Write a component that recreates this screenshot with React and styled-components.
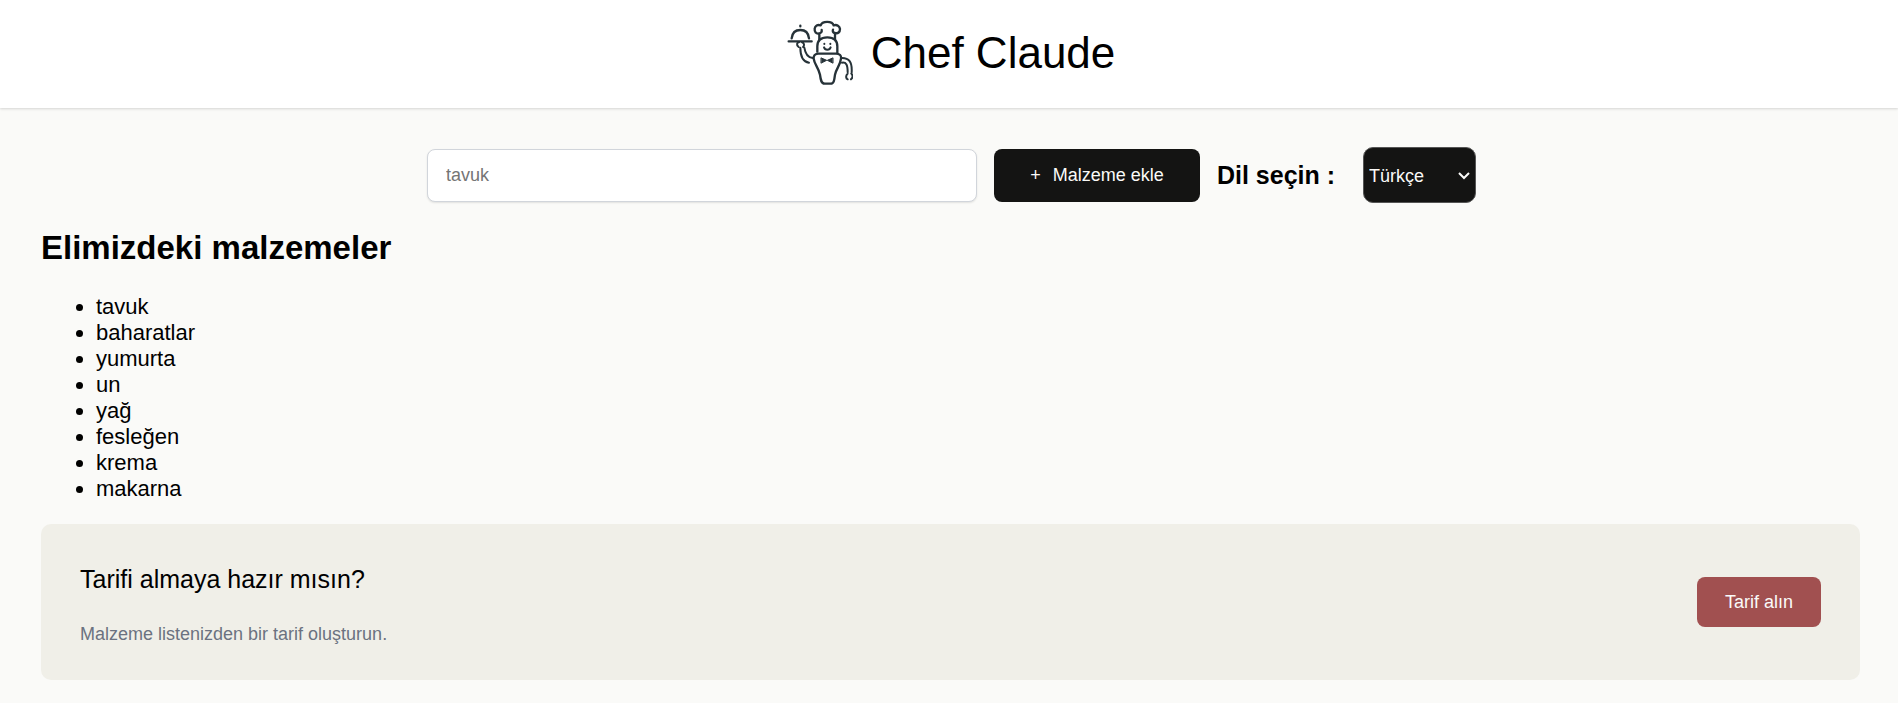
import React from "react";
import styled, { createGlobalStyle } from "styled-components";

const GlobalStyle = createGlobalStyle`
  * { box-sizing: border-box; }
  body {
    margin: 0;
    background: #fafaf8;
    color: #000;
    font-family: "Liberation Sans", Arial, sans-serif;
    font-size: 22px;
    line-height: 26px;
  }
  html { background: #fafaf8; }
  h1, h2, h3, p, ul { margin: 0; }
  button, input, select { font: inherit; font-size: 18px; }
`;

const Header = styled.header`
  display: flex;
  justify-content: center;
  align-items: center;
  gap: 18px;
  padding: 20px 16px 22px 20px;
  background: #fff;
  box-shadow: 0 1px 3px rgba(0, 0, 0, 0.1), 0 1px 2px rgba(0, 0, 0, 0.06);
  position: relative;
`;

const Title = styled.h1`
  font-size: 44px;
  line-height: 50px;
  font-weight: 400;
`;

const Logo = styled.svg`
  width: 66px;
  height: 66px;
  fill: none;
  stroke: #263238;
  stroke-width: 7;
  stroke-linecap: round;
  stroke-linejoin: round;
`;

const Main = styled.main`
  padding: 39px 38px 24px 41px;
`;

const Form = styled.form`
  display: flex;
  justify-content: center;
  align-items: center;
  gap: 17px;
  padding-left: 2px;
`;

const IngredientInput = styled.input`
  flex: 0 1 550px;
  min-width: 150px;
  height: 53px;
  padding: 0 18px;
  border: 1px solid #d1d5db;
  border-radius: 8px;
  background: #fff;
  box-shadow: 0 1px 2px rgba(0, 0, 0, 0.1);
  &::placeholder { color: #757575; }
`;

const Button = styled.button`
  display: flex;
  justify-content: center;
  align-items: center;
  gap: 12px;
  flex: none;
  width: ${(p) => p.$width}px;
  height: ${(p) => p.$height}px;
  padding: 0;
  border: 0;
  border-radius: 8px;
  background: ${(p) => p.$background};
  color: #fafaf8;
`;

const Language = styled.div`
  display: flex;
  align-items: center;
  gap: 28px;
`;

const LanguageLabel = styled.label`
  font-size: 25px;
  font-weight: 700;
  white-space: nowrap;
`;

const SelectBox = styled.div`
  display: grid;
  align-items: center;
  justify-items: end;
  & > * { grid-area: 1 / 1; }
`;

const LanguageSelect = styled.select`
  appearance: none;
  width: 113px;
  height: 56px;
  padding: 2px 24px 0 5px;
  border: 1px solid #555;
  border-radius: 10px;
  background: #141413;
  color: #fafaf8;
`;

const Chevron = styled.svg`
  width: 12px;
  height: 8px;
  margin: 2px 6px 0 0;
  fill: none;
  stroke: #fafaf8;
  stroke-width: 2;
  pointer-events: none;
`;

const Heading = styled.h2`
  margin-top: 26px;
  font-size: 33px;
  line-height: 38px;
  font-weight: 700;
`;

const Ingredients = styled.ul`
  margin-top: 27px;
  padding-left: 55px;
`;

const Card = styled.section`
  display: flex;
  justify-content: space-between;
  align-items: center;
  margin-top: 22px;
  padding: 34px 39px;
  border-radius: 10px;
  background: #f0efe8;
`;

const CardText = styled.div`
  display: grid;
  gap: 22px;
`;

const CardTitle = styled.h3`
  font-size: 25px;
  line-height: 42px;
  font-weight: 400;
`;

const CardNote = styled.p`
  font-size: 18px;
  line-height: 24px;
  color: #6b7280;
`;

const ingredients = ["tavuk", "baharatlar", "yumurta", "un", "yağ", "fesleğen", "krema", "makarna"];

function ChefLogo() {
  return (
    <Logo viewBox="21 30 198 198" aria-hidden="true">
      <path d="M26 94H95M35 85C37 67 47 60 61 60S85 67 87 85M61 47V49" />
      <path d="M118 88V70C108 73 103 65 104 56C105 47 113 43 122 46C126 32 157 32 161 46C171 43 179 48 180 57C180 66 174 72 165 69V88M118 70C124 69 126 65 125 60M165 69C159 68 157 64 159 59" />
      <path d="M112 125V109C112 90 124 82 142 82S172 90 172 109V129" />
      <path d="M133 101V102M151 101V102M132 112C135 122 149 122 152 112" strokeWidth="6" />
      <path d="M116 131H168C179 131 185 137 183 146C181 166 169 175 165 194C163 210 162 221 152 221H134C123 221 122 209 120 194C116 174 103 163 101 146C100 137 105 131 116 131Z" />
      <path d="M124 144L140 151L124 159ZM158 144L142 151L158 159Z" fill="#263238" strokeWidth="3" />
      <path d="M98 144C84 143 76 132 73 113M87 158C69 155 61 141 61 113M56 111C48 105 51 97 57 97M66 97C73 99 74 107 69 111" strokeWidth="6" />
      <path d="M184 144C207 143 217 156 215 187M186 158C199 156 203 165 203 187M203 191C196 198 198 206 203 208M213 208C219 203 219 196 214 191" strokeWidth="6" />
    </Logo>
  );
}

export default function App() {
  return (
    <>
      <GlobalStyle />
      <Header>
        <ChefLogo />
        <Title>Chef Claude</Title>
      </Header>
      <Main>
        <Form onSubmit={(e) => e.preventDefault()}>
          <IngredientInput type="text" placeholder="tavuk" aria-label="Malzeme ekle" />
          <Button type="submit" $width={206} $height={53} $background="#141413">
            <span>+</span>
            <span>Malzeme ekle</span>
          </Button>
          <Language>
            <LanguageLabel htmlFor="language">Dil seçin :</LanguageLabel>
            <SelectBox>
              <LanguageSelect id="language" defaultValue="tr">
                <option value="tr">Türkçe</option>
                <option value="en">English</option>
              </LanguageSelect>
              <Chevron viewBox="0 0 12 8" aria-hidden="true">
                <path d="M1 1L6 6L11 1" />
              </Chevron>
            </SelectBox>
          </Language>
        </Form>
        <Heading>Elimizdeki malzemeler</Heading>
        <Ingredients>
          {ingredients.map((name) => (
            <li key={name}>{name}</li>
          ))}
        </Ingredients>
        <Card>
          <CardText>
            <CardTitle>Tarifi almaya hazır mısın?</CardTitle>
            <CardNote>Malzeme listenizden bir tarif oluşturun.</CardNote>
          </CardText>
          <Button type="button" $width={124} $height={50} $background="#a15050">
            Tarif alın
          </Button>
        </Card>
      </Main>
    </>
  );
}
